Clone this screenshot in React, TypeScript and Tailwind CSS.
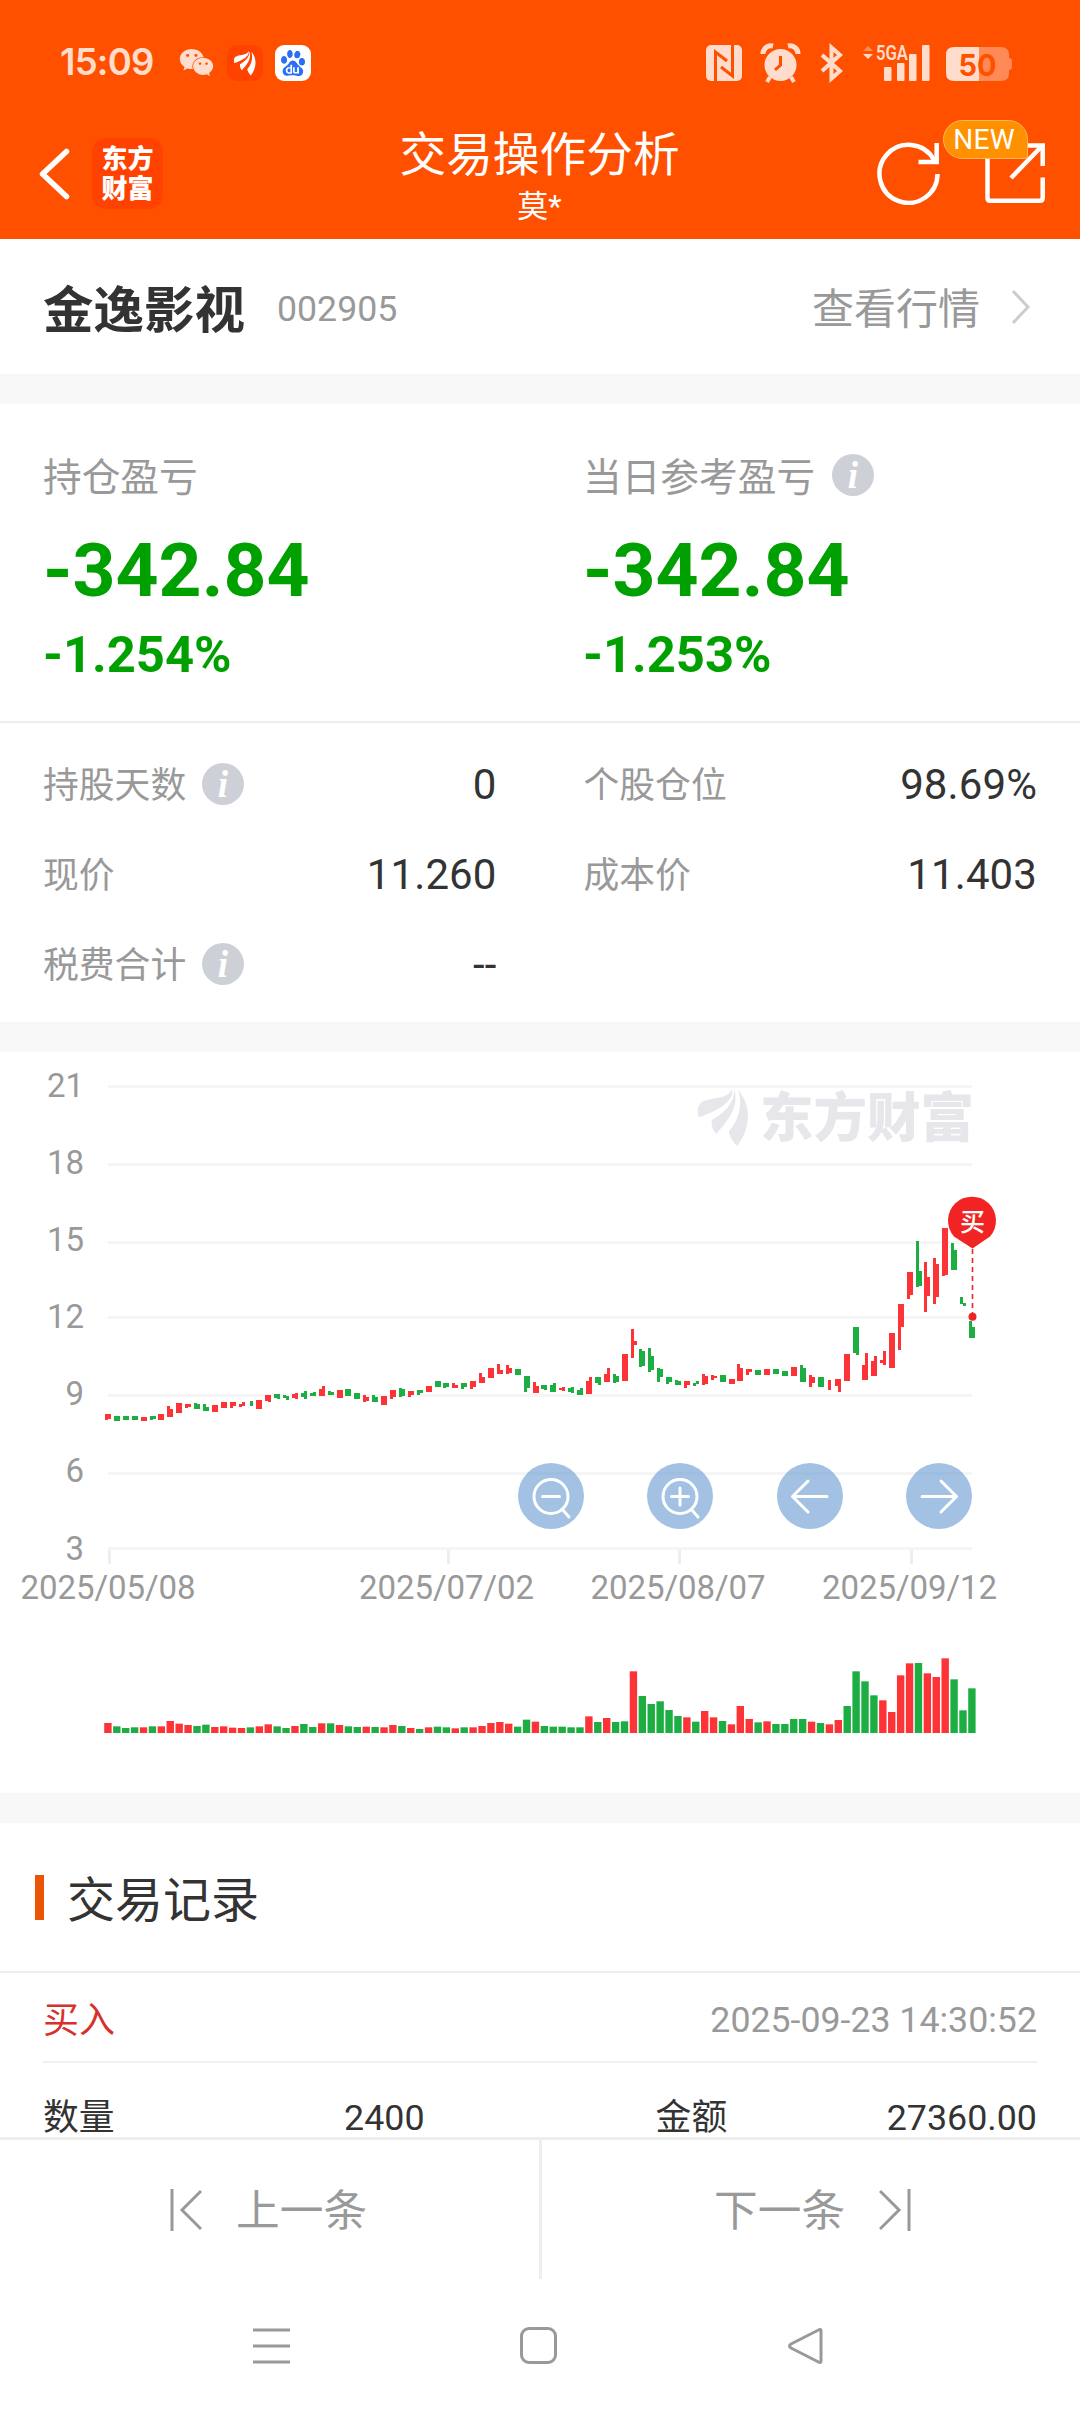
import React from "react";
import { FaWeixin } from "react-icons/fa";
import { SiBaidu } from "react-icons/si";
import { clsx } from "clsx";

type Span = [number, number];
type Candle = ["R" | "G", Span, Span?];

const RED = "#fc3437";
const GREEN = "#1cae42";

const CHART_TOP = 1052;
const FIRST_X = 108;
const STEP = 864 / 97;

// each entry: colour, left half of the candle, right half of the candle (thirds of a pixel)
const candles: Candle[] = [
  ["R", [463, 480], [463, 477]], ["G", [467, 483], [467, 483]], ["G", [468, 480], [468, 480]],
  ["G", [468, 480], [468, 480]], ["R", [470, 484], [470, 484]], ["G", [469, 480], [467, 477]],
  ["R", [462, 480], [462, 480]], ["R", [438, 470], [446, 470]], ["R", [429, 458], [429, 458]],
  ["R", [431, 443], [431, 441]], ["G", [428, 448], [432, 448]], ["G", [432, 454], [440, 454]],
  ["R", [435, 455], [435, 455]], ["R", [425, 445], [425, 445]], ["R", [427, 443], [427, 438]],
  ["R", [433, 440], [427, 438]], ["G", [423, 438]], ["R", [419, 446], [419, 446]],
  ["R", [404, 423], [404, 426]], ["G", [401, 414], [401, 418]], ["G", [406, 415], [408, 421]],
  ["R", [401, 415], [398, 418]], ["G", [398, 410], [394, 418]], ["G", [398, 408], [395, 408]],
  ["R", [388, 408], [378, 408]], ["G", [392, 406], [396, 406]], ["R", [389, 414], [389, 414]],
  ["G", [387, 408], [387, 408]], ["G", [399, 417], [399, 417]], ["R", [405, 425], [411, 423]],
  ["G", [404, 427], [410, 427]], ["R", [407, 435], [407, 435]], ["R", [391, 416], [391, 410]],
  ["G", [384, 411], [387, 407]], ["R", [394, 410], [394, 406]], ["G", [390, 405], [390, 400]],
  ["R", [378, 396], [378, 396]], ["G", [363, 382], [363, 382]], ["G", [370, 384], [370, 381]],
  ["R", [368, 384], [374, 384]], ["G", [370, 387], [370, 381]], ["R", [363, 388], [363, 381]],
  ["R", [338, 369], [350, 369]], ["R", [324, 354], [324, 354]], ["R", [313, 342], [329, 342]],
  ["R", [316, 342], [325, 338]], ["G", [328, 346], [328, 346]], ["G", [348, 396], [348, 384]],
  ["R", [367, 398], [378, 398]], ["G", [375, 388], [375, 391]], ["G", [374, 395], [369, 395]],
  ["R", [384, 390], [381, 393]], ["G", [385, 396], [380, 398]], ["G", [390, 404], [385, 404]],
  ["R", [363, 402], [351, 402]], ["G", [352, 368], [350, 374]], ["R", [342, 366], [324, 366]],
  ["G", [342, 370], [348, 365]], ["R", [283, 364], [283, 364]], ["R", [207, 293], [242, 254]],
  ["G", [267, 322], [272, 318]], ["G", [265, 336], [289, 331]], ["G", [324, 366], [328, 350]],
  ["G", [351, 372], [351, 365]], ["G", [360, 374], [362, 375]], ["R", [363, 383], [363, 376]],
  ["G", [368, 378], [363, 372]], ["R", [343, 375], [348, 372]], ["R", [344, 360], [348, 355]],
  ["G", [346, 367], [346, 367]], ["R", [357, 373], [357, 373]], ["R", [313, 363], [325, 363]],
  ["R", [328, 345], [328, 337]], ["G", [331, 346], [331, 346]], ["R", [327, 345], [327, 345]],
  ["G", [327, 343], [327, 343]], ["G", [333, 347], [333, 347]], ["R", [322, 348], [322, 348]],
  ["G", [315, 367], [325, 367]], ["R", [345, 381], [352, 368]], ["G", [352, 381], [352, 381]],
  ["R", [361, 390]], ["R", [357, 378], [357, 397]], ["R", [283, 364], [283, 364]],
  ["G", [202, 280], [202, 285]], ["R", [314, 361], [280, 361]], ["R", [303, 348], [288, 348]],
  ["R", [300, 310], [273, 315]], ["R", [219, 323], [219, 323]], ["R", [132, 270], [132, 202]],
  ["R", [36, 118], [36, 104]], ["G", [-57, 81], [32, 77]], ["R", [6, 155], [52, 109]],
  ["R", [-6, 133], [11, 111]], ["R", [-97, 47], [-97, 46]], ["G", [-50, 30], [-30, 30]],
  ["G", [111, 133], [130, 137]], ["G", [183, 234], [202, 234]],
];

// bar heights, thirds of a pixel
const volumes = [
  30, 20, 15, 17, 17, 20, 20, 36, 28, 24, 21, 25, 18, 20, 16, 15, 17, 20, 26, 20,
  15, 21, 27, 18, 29, 29, 24, 20, 18, 19, 18, 17, 24, 21, 15, 12, 17, 19, 17, 14,
  17, 17, 21, 30, 33, 28, 19, 40, 34, 21, 19, 19, 17, 17, 50, 33, 45, 33, 35, 185,
  111, 87, 95, 69, 51, 47, 34, 66, 47, 36, 26, 81, 42, 32, 35, 27, 27, 42, 42, 34,
  30, 26, 39, 81, 185, 155, 113, 98, 63, 173, 209, 210, 179, 168, 224, 161, 68, 134,
];
// volume colours do not always follow the candle
const volumeColors =
  "RGGGRGRRRRGGRRRRGRRGGRGGRGRGGRGRRGRGRGGRGRRRRRGGRGGGGGRGRGGRGGGGGRGRRGRRRGRGGGGRGRRGGGGRRRRGRRRGGG";

const gridLines = [
  { y: 1085, labelY: 1096.5, label: "21" },
  { y: 1163, labelY: 1173.5, label: "18" },
  { y: 1241, labelY: 1250.5, label: "15" },
  { y: 1316, labelY: 1328, label: "12" },
  { y: 1394, labelY: 1405, label: "9" },
  { y: 1472, labelY: 1482, label: "6" },
  { y: 1547, labelY: 1559.5, label: "3" },
];

const dates = [
  { x: 108, label: "2025/05/08" },
  { x: 446.5, label: "2025/07/02" },
  { x: 678, label: "2025/08/07" },
  { x: 909.5, label: "2025/09/12" },
];

const Feather = () => (
  <g>
    <path d="M0 27C-1 18 1 14 6 12C17 8 30 10 34 0C37 13 18 22 2 28Z" />
    <path d="M36 0C42 18 29 33 18 45C14 40 13 33 14 31C22 26 37 17 36 0Z" />
    <path d="M40 1C53 15 54 38 39 57C34 51 31 47 31 42C41 32 45 14 40 1Z" />
  </g>
);

const InfoIcon = ({ className }: { className?: string }) => (
  <svg className={clsx("size-[42px] shrink-0", className)} viewBox="0 0 42 42">
    <circle cx="21" cy="21" r="21" fill="#cdd1d7" />
    <text x="21" y="34" textAnchor="middle" fontFamily="Liberation Serif" fontStyle="italic" fontWeight="700" fontSize="37" fill="#fff">i</text>
  </svg>
);

const StatusBar = () => (
  <div className="flex h-[125px] items-center justify-between pl-[60px] pr-[68px] text-[#ffdccb]">
    <div className="flex items-center">
      <span className="w-[119px] pb-px font-['Inter'] text-[36.500px] font-semibold leading-none tracking-[-0.8px]">15:09</span>
      <FaWeixin className="size-[35px]" />
      <svg className="ml-[13px] size-9" viewBox="0 0 36 36">
        <rect width="36" height="36" rx="10" fill="#ff4200" />
        <g transform="translate(7 6) scale(.43)" fill="#fff"><Feather /></g>
      </svg>
      <div className="ml-3 flex size-9 items-center justify-center rounded-[9px] bg-white">
        <SiBaidu className="size-[26px] text-[#2b6ff5]" />
      </div>
    </div>
    <svg width="306" height="50" viewBox="706 37 306 50" fill="#ffdccb">
      <rect x="706" y="44" width="36" height="36" rx="5" />
      <path d="M715.500 80V51L727 60M732.500 44V75L721 66" fill="none" stroke="#ff5000" strokeWidth="3" />
      <circle cx="780.500" cy="64" r="16" />
      <path d="M763 53A8 8 0 0 1 773 45M798 53A8 8 0 0 0 788 45" stroke="#ffdccb" strokeWidth="5" fill="none" />
      <path d="M770 76L767 81M791 76L794 81" stroke="#ffdccb" strokeWidth="4" />
      <path d="M780.500 55V64L775 69" fill="none" stroke="#ff5000" strokeWidth="3" />
      <path d="M822 54L840 70L831.500 77.500V46.500L840 54L822 70" fill="none" stroke="#ffdccb" strokeWidth="4" />
      <path d="M863 50L868 45L873 50Z" fill="#ff8a56" />
      <path d="M863 53H873L868 58Z" />
      <text x="876" y="59" fontSize="21" fontWeight="600" textLength="32" lengthAdjust="spacingAndGlyphs">5GA</text>
      <rect x="884" y="66" width="7.500" height="14" rx="1" />
      <rect x="897" y="62" width="7.500" height="18" rx="1" />
      <rect x="909" y="53" width="7.500" height="27" rx="1" />
      <rect x="922" y="44" width="7.500" height="36" rx="1" />
      <path d="M979 46H1001Q1009 46 1009 54V57Q1012 57 1012 60V66Q1012 69 1009 69V72Q1009 80 1001 80H979Z" fill="#ff8a56" />
      <path d="M979 46H954Q946 46 946 54V72Q946 80 954 80H979Z" />
      <text x="958.500" y="74.500" fontFamily="Inter" fontSize="30" fontWeight="700" fill="#ff5000" textLength="38" lengthAdjust="spacingAndGlyphs">50</text>
    </svg>
  </div>
);

const TitleBar = () => (
  <div className="flex h-[114px] items-start pt-px text-white">
    <div className="flex flex-1 items-center gap-[22px] pl-[38px] pt-3">
      <svg width="32" height="52" viewBox="0 0 32 52">
        <path d="M28.500 3.500L4.500 26L28.500 48.500" fill="none" stroke="#fff" strokeWidth="5.500" strokeLinecap="round" strokeLinejoin="round" />
      </svg>
      <div className="flex size-[71px] flex-col items-center justify-center rounded-[14px] bg-[#ff4200] text-[26px] font-black leading-[30px]">
        <span>东方</span>
        <span>财富</span>
      </div>
    </div>
    <div className="flex flex-col items-center pr-[6px]">
      <h1 className="mt-[5px] text-[46.700px] leading-[48px]">交易操作分析</h1>
      <span className="mt-[12px] text-[31px] leading-[32px]">莫*</span>
    </div>
    <div className="flex flex-1 justify-end gap-[44px] pr-[33px] pt-[15px]">
      <svg width="64" height="64" viewBox="876 141 64 64" fill="none" stroke="#fff" strokeWidth="4.500">
        <path d="M937.500 174A29 29 0 1 1 934 160" />
        <path d="M918.500 162H936.700V143" />
      </svg>
      <div className="relative">
        <svg width="63" height="64" viewBox="984 141 63 64" fill="none" stroke="#fff" strokeWidth="4.500">
          <path d="M987.500 150V198Q987.500 200.700 990 200.700H1040Q1042.700 200.700 1042.700 198V177.500" />
          <path d="M1020 145.500H1042.700V166" />
          <path d="M1011 178L1042 146" />
        </svg>
        <span className="absolute -left-[41px] -top-[21px] flex h-[39px] w-[85px] items-center justify-center rounded-[20px] rounded-br-[3px] border border-[#ffb65c] bg-[#ff9100] pr-[3px] pt-px text-[28px] leading-none tracking-[0.3px]">
          NEW
        </span>
      </div>
    </div>
  </div>
);

const Summary = ({ label, amount, percent, info }: { label: string; amount: string; percent: string; info?: boolean }) => (
  <div className="flex w-[540px] shrink-0 flex-col text-[#00a000]">
    <div className="flex h-[42px] items-center gap-[17px] text-[38.700px] text-[#999]">
      <span className="pt-[6px]">{label}</span>
      {info && <InfoIcon />}
    </div>
    <div className="mt-[36px] text-[75px] font-bold leading-[76px]">{amount}</div>
    <div className="mt-[21px] text-[50.700px] font-bold leading-[52px]">{percent}</div>
  </div>
);

const Detail = ({ label, value, info }: { label: string; value: string; info?: boolean }) => (
  <div className="flex h-[90px] items-center justify-between">
    <div className="flex items-center gap-[16px] text-[35.800px] text-[#999]">
      <span className="pt-[3px]">{label}</span>
      {info && <InfoIcon className="-mt-[3px]" />}
    </div>
    <div className="text-[42px] tracking-[0.1px] text-[#333]">{value}</div>
  </div>
);

const zoomIcon = "M21 8.500A17 17 0 1 0 21 42.500A17 17 0 1 0 21 8.500M32 38L39 46";

const chartButtons = [
  { name: "缩小", d: `${zoomIcon}M12.500 25.500H29.500` },
  { name: "放大", d: `${zoomIcon}M12.500 25.500H29.500M21 17V34` },
  { name: "左移", d: "M38 25.500H3.500M19 10L3.500 25.500L19 41" },
  { name: "右移", d: "M4 25.500H38.500M23 10L38.500 25.500L23 41" },
];

const Chart = () => (
  <section className="relative h-[741px] shrink-0">
    <svg width="1080" height="741" viewBox={`0 ${CHART_TOP} 1080 741`} fill="#999" fontSize="33">
      {gridLines.map(({ y, labelY, label }) => (
        <g key={label}>
          <rect x="108" y={y} width="864" height="3" fill="#f5f5f5" />
          <text x="84" y={labelY} textAnchor="end">{label}</text>
        </g>
      ))}
      {dates.map(({ x, label }) => (
        <g key={label}>
          <rect x={Math.round(x)} y="1550" width="3" height="14" fill="#eee" />
          <text x={x} y="1599" textAnchor="middle" textLength="175">{label}</text>
        </g>
      ))}
      <g fill="#e6e6eb">
        <g transform="translate(698 1089)"><Feather /></g>
        <text x="760" y="1137" fontSize="53.500" fontWeight="900" textLength="214">东方财富</text>
      </g>
      <g shapeRendering="crispEdges">
        {candles.map(([color, left, right], i) => {
          const x = Math.round(FIRST_X + i * STEP);
          const fill = color === "R" ? RED : GREEN;
          const y = (v: number) => 1260 + v / 3;
          if (!right) {
            return <rect key={i} x={x - 1} y={y(left[0])} width="3" height={(left[1] - left[0]) / 3} fill={fill} />;
          }
          return (
            <g key={i} fill={fill}>
              <rect x={x - 3} y={y(left[0])} width="3" height={(left[1] - left[0]) / 3} />
              <rect x={x} y={y(right[0])} width="3" height={(right[1] - right[0]) / 3} />
            </g>
          );
        })}
      </g>
      {volumes.map((v, i) => (
        <rect
          key={i}
          x={FIRST_X + i * STEP - 3.8}
          y={1733 - v / 3}
          width="7.400"
          height={v / 3}
          fill={volumeColors[i] === "R" ? RED : GREEN}
        />
      ))}
      <path d="M972.500 1249V1314" stroke="#e02a2a" strokeWidth="1.600" strokeDasharray="5 4" />
      <circle cx="972.500" cy="1316.700" r="4" fill="#ee2424" />
      <path d="M972.500 1248.500L954 1236.500A24 24 0 1 1 990 1236.500Z" fill="#f22323" />
      <text x="972.500" y="1230.500" fontSize="25" fontWeight="500" fill="#fff" textAnchor="middle">买</text>
    </svg>
    <div className="absolute left-[518px] top-[411px] flex w-[454px] justify-between">
      {chartButtons.map(({ name, d }) => (
        <button key={name} aria-label={name} className="flex size-[66px] items-center justify-center rounded-full bg-[#6498d0]/60">
          <svg width="42" height="51" viewBox="0 0 42 51" fill="none" stroke="#fff" strokeWidth="3" strokeLinecap="round" strokeLinejoin="round">
            <path d={d} />
          </svg>
        </button>
      ))}
    </div>
  </section>
);

const Gap = () => <div className="h-[30px] shrink-0 bg-[#f8f8f8]" />;

const PageButton = ({ label, next }: { label: string; next?: boolean }) => (
  <button
    className={clsx(
      "flex h-[139px] items-center gap-[34px] whitespace-nowrap text-[43.700px] text-[#999]",
      next ? "w-[541px] flex-row-reverse justify-end border-l-[3px] border-[#eee] pl-[172px]" : "w-[539px] pl-[170px]"
    )}
  >
    <svg width="32" height="42" viewBox="0 0 32 42" fill="none" stroke="#999" strokeWidth="3">
      <path d={next ? "M30 0V42M1 2L20 21L1 40" : "M2 0V42M31 2L12 21L31 40"} />
    </svg>
    <span className="pt-[4px]">{label}</span>
  </button>
);

export default function App() {
  return (
    <div className="flex h-[2412px] w-[1080px] flex-col overflow-hidden bg-white font-['Roboto','Noto_Sans_CJK_SC',sans-serif] leading-none text-[#333]">
      <header className="h-[239px] shrink-0 bg-[#ff5000]">
        <StatusBar />
        <TitleBar />
      </header>

      <section className="flex h-[135px] shrink-0 items-center pl-[43px] pr-[50px]">
        <h2 className="pt-[9px] text-[50.500px] font-bold">金逸影视</h2>
        <span className="ml-[32px] pt-[7px] text-[35.700px] text-[#999]">002905</span>
        <span className="ml-auto pt-[6px] text-[42px] text-[#999]">查看行情</span>
        <svg className="ml-[32px]" width="18" height="36" viewBox="0 0 18 36" fill="none" stroke="#ccc" strokeWidth="3">
          <path d="M1 2L16 18L1 34" />
        </svg>
      </section>
      <Gap />

      <section className="h-[618px] shrink-0">
        <div className="flex h-[319px] border-b-2 border-[#eee] pl-[43px] pt-[50px]">
          <Summary label="持仓盈亏" amount="-342.84" percent="-1.254%" />
          <Summary label="当日参考盈亏" amount="-342.84" percent="-1.253%" info />
        </div>
        <div className="grid grid-cols-2 gap-x-[87px] px-[43px] pt-[17px]">
          <Detail label="持股天数" value="0" info />
          <Detail label="个股仓位" value="98.69%" />
          <Detail label="现价" value="11.260" />
          <Detail label="成本价" value="11.403" />
          <Detail label="税费合计" value="--" info />
        </div>
      </section>
      <Gap />

      <Chart />
      <Gap />

      <section className="h-[314px] shrink-0">
        <div className="flex h-[150px] items-center border-b-2 border-[#eee] pl-[35px]">
          <div className="h-[45px] w-[9px] bg-[#ea5504]" />
          <h3 className="ml-[23px] pt-[7px] text-[48px]">交易记录</h3>
        </div>
        <div className="mx-[43px] flex h-[90px] items-center justify-between border-b-2 border-[#f0f0f0] pt-[8px] text-[36px]">
          <span className="text-[#d9302c]">买入</span>
          <span className="text-[35.700px] text-[#999]">2025-09-23 14:30:52</span>
        </div>
        <div className="flex h-[74px] items-start px-[43px] pt-[36px] text-[35.800px] leading-[38px]">
          <span>数量</span>
          <span className="w-[310px] text-right">2400</span>
          <span className="ml-[231px]">金额</span>
          <span className="ml-auto">27360.00</span>
        </div>
      </section>

      <footer className="shrink-0">
        <div className="flex border-t-[3px] border-[#eee]">
          <PageButton label="上一条" />
          <PageButton label="下一条" next />
        </div>
        <div className="flex h-[133px] items-center justify-between pl-[253px] pr-[257px]">
          <svg width="37" height="36" viewBox="0 0 37 36" stroke="#999" strokeWidth="3">
            <path d="M0 2H37M0 18H37M0 34H37" />
          </svg>
          <div className="size-[37px] rounded-[9px] border-[3px] border-[#999]" />
          <svg width="36" height="38" viewBox="0 0 36 38" fill="none" stroke="#999" strokeWidth="3" strokeLinejoin="round">
            <path d="M34 4V34Q34 36.500 31.500 35L4 21Q1 19 4 17L31.500 3Q34 1.500 34 4Z" />
          </svg>
        </div>
      </footer>
    </div>
  );
}
